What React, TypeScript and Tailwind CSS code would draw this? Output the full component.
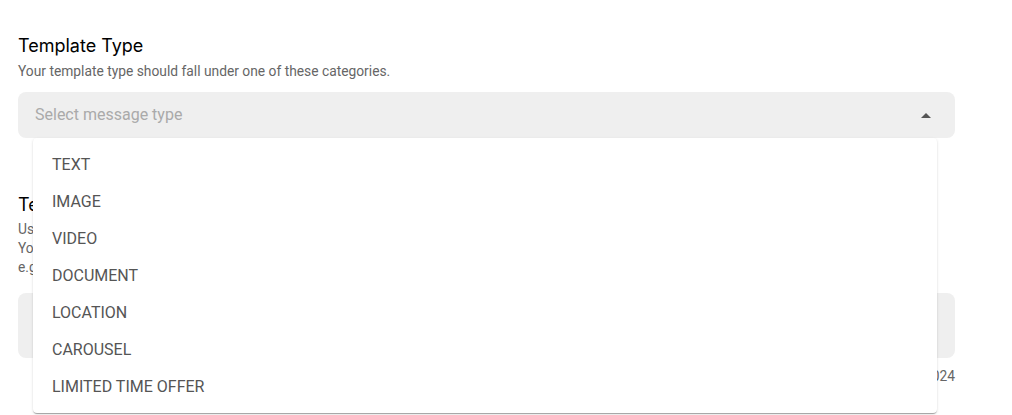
import React from "react";

const items = ["TEXT", "IMAGE", "VIDEO", "DOCUMENT", "LOCATION", "CAROUSEL", "LIMITED TIME OFFER"];

export default function App() {
  return (
    <div className="relative w-[1012px] h-[415px] overflow-hidden bg-white" style={{ fontFamily: "Roboto, 'Noto Sans', sans-serif" }}>
      <div className="pl-[18px] pt-[34px] w-[955px] flex flex-col">
        <div className="text-[18px] leading-[24px] text-black" style={{ fontFamily: "Inter, sans-serif" }}>Template Type</div>
        <div className="mt-[4px] text-[13.8px] leading-[18px] text-[#666]">Your template type should fall under one of these categories.</div>
        <div className="mt-[12px] h-[46px] rounded-[8px] bg-[#efefef] flex items-center justify-between pl-[17px] pr-[24px]">
          <span className="text-[16px] text-[#aaa]">Select message type</span>
          <svg width="10" height="5" viewBox="0 0 10 5"><path d="M0 5 L5 0 L10 5 Z" fill="#555" /></svg>
        </div>
        <div className="mt-[55px] text-[18px] leading-[24px] text-black" style={{ fontFamily: "Inter, sans-serif" }}>Template Body</div>
        <div className="mt-[3px] text-[13.8px] leading-[19px] text-[#666]">
          <div>Use text formatting - *bold*, _italic_ and ~strikethrough~.</div>
          <div>Your message content. Up to 1024 characters are allowed.</div>
          <div>e.g. Hello {"{{1}}"}, your code will expire in 30 mins.</div>
        </div>
        <div className="mt-[16px] h-[65px] rounded-[8px] bg-[#efefef]" />
        <div className="mt-[9px] text-right text-[13.8px] leading-[18px] text-[#666]">0/1024</div>
      </div>
      <div className="absolute left-[33px] top-[138px] w-[904px] rounded-[4px] bg-white py-[8px] shadow-[0_2px_1px_-1px_rgba(0,0,0,0.2),0_1px_1px_0_rgba(0,0,0,0.14),0_1px_3px_0_rgba(0,0,0,0.12)]">
        {items.map((it) => (
          <div key={it} className="h-[37px] flex items-center px-[19px] text-[16px] text-[#555]">{it}</div>
        ))}
      </div>
    </div>
  );
}
